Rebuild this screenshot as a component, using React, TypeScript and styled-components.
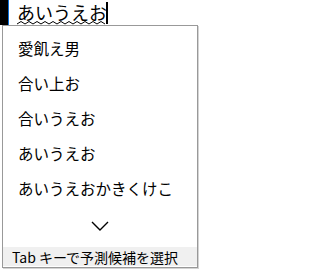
import React from 'react';
import styled, { createGlobalStyle } from 'styled-components';

const candidates = ['愛飢え男', '合い上お', '合いうえお', 'あいうえお', 'あいうえおかきくけこ'];

const wavePoints = Array.from({ length: 23 }, (_, i) => `${i * 4},${i % 2 ? 0.5 : 3}`).join(' ');

export default function App() {
    return (
        <>
            <GlobalStyle />
            <StyledPage>
                <StyledComposition>
                    <StyledEdge />
                    <StyledFocusLine />
                    <StyledInput>
                        <StyledPreeditBox>
                            <StyledPreedit>あいうえお</StyledPreedit>
                            <svg width="88" height="4" viewBox="0 0 88 4">
                                <polyline
                                    points={wavePoints}
                                    fill="none"
                                    stroke="#000"
                                    strokeWidth="1"
                                />
                            </svg>
                        </StyledPreeditBox>
                        <StyledCaret />
                    </StyledInput>
                </StyledComposition>
                <StyledPopup>
                    <StyledList>
                        {candidates.map((item) => (
                            <StyledCandidate key={item}>{item}</StyledCandidate>
                        ))}
                    </StyledList>
                    <StyledMore>
                        <svg width="18" height="10" viewBox="0 0 18 10">
                            <path
                                d="M1 1 L9 9 L17 1"
                                fill="none"
                                stroke="#000"
                                strokeWidth="1.4"
                            />
                        </svg>
                    </StyledMore>
                    <StyledHint>Tab キーで予測候補を選択</StyledHint>
                </StyledPopup>
            </StyledPage>
        </>
    );
}

const GlobalStyle = createGlobalStyle`
    html, body {
        margin: 0;
        padding: 0;
        background: #ffffff;
    }
    body {
        font-family: "Noto Sans CJK JP", "Noto Sans", sans-serif;
    }
`;

const StyledPage = styled.div`
    width: 200px;
    height: 270px;
    overflow: hidden;
    background: #ffffff;
`;

const StyledComposition = styled.div`
    display: flex;
    height: 25px;
`;

const StyledEdge = styled.div`
    width: 8px;
    background: #000000;
`;

const StyledFocusLine = styled.div`
    width: 1px;
    background: #0a6fd8;
`;

const StyledInput = styled.div`
    display: flex;
    align-items: flex-start;
    padding-left: 8px;
`;

const StyledPreeditBox = styled.div`
    display: flex;
    flex-direction: column;
    padding-top: 1px;

    svg {
        display: block;
        margin-top: -2px;
    }
`;

const StyledPreedit = styled.span`
    font-size: 18px;
    line-height: 22px;
    color: #000000;
    white-space: nowrap;
`;

const StyledCaret = styled.div`
    width: 2px;
    height: 22px;
    margin-top: 2px;
    margin-left: -1px;
    background: #000000;
`;

const StyledPopup = styled.div`
    display: flex;
    flex-direction: column;
    margin-left: 2px;
    width: 194px;
    height: 241px;
    border: 1px solid #999999;
    box-shadow: 1px 1px 0 #d4d4d4;
`;

const StyledList = styled.div`
    display: flex;
    flex-direction: column;
    padding-top: 4px;
`;

const StyledCandidate = styled.div`
    height: 35px;
    display: flex;
    align-items: center;
    padding-left: 15px;
    font-size: 15.5px;
    color: #000000;
    white-space: nowrap;
`;

const StyledMore = styled.div`
    height: 42px;
    display: flex;
    align-items: center;
    justify-content: center;
`;

const StyledHint = styled.div`
    height: 19px;
    display: flex;
    align-items: center;
    padding-left: 9px;
    background: #f0f0f0;
    font-size: 14px;
    color: #000000;
    white-space: nowrap;
`;
